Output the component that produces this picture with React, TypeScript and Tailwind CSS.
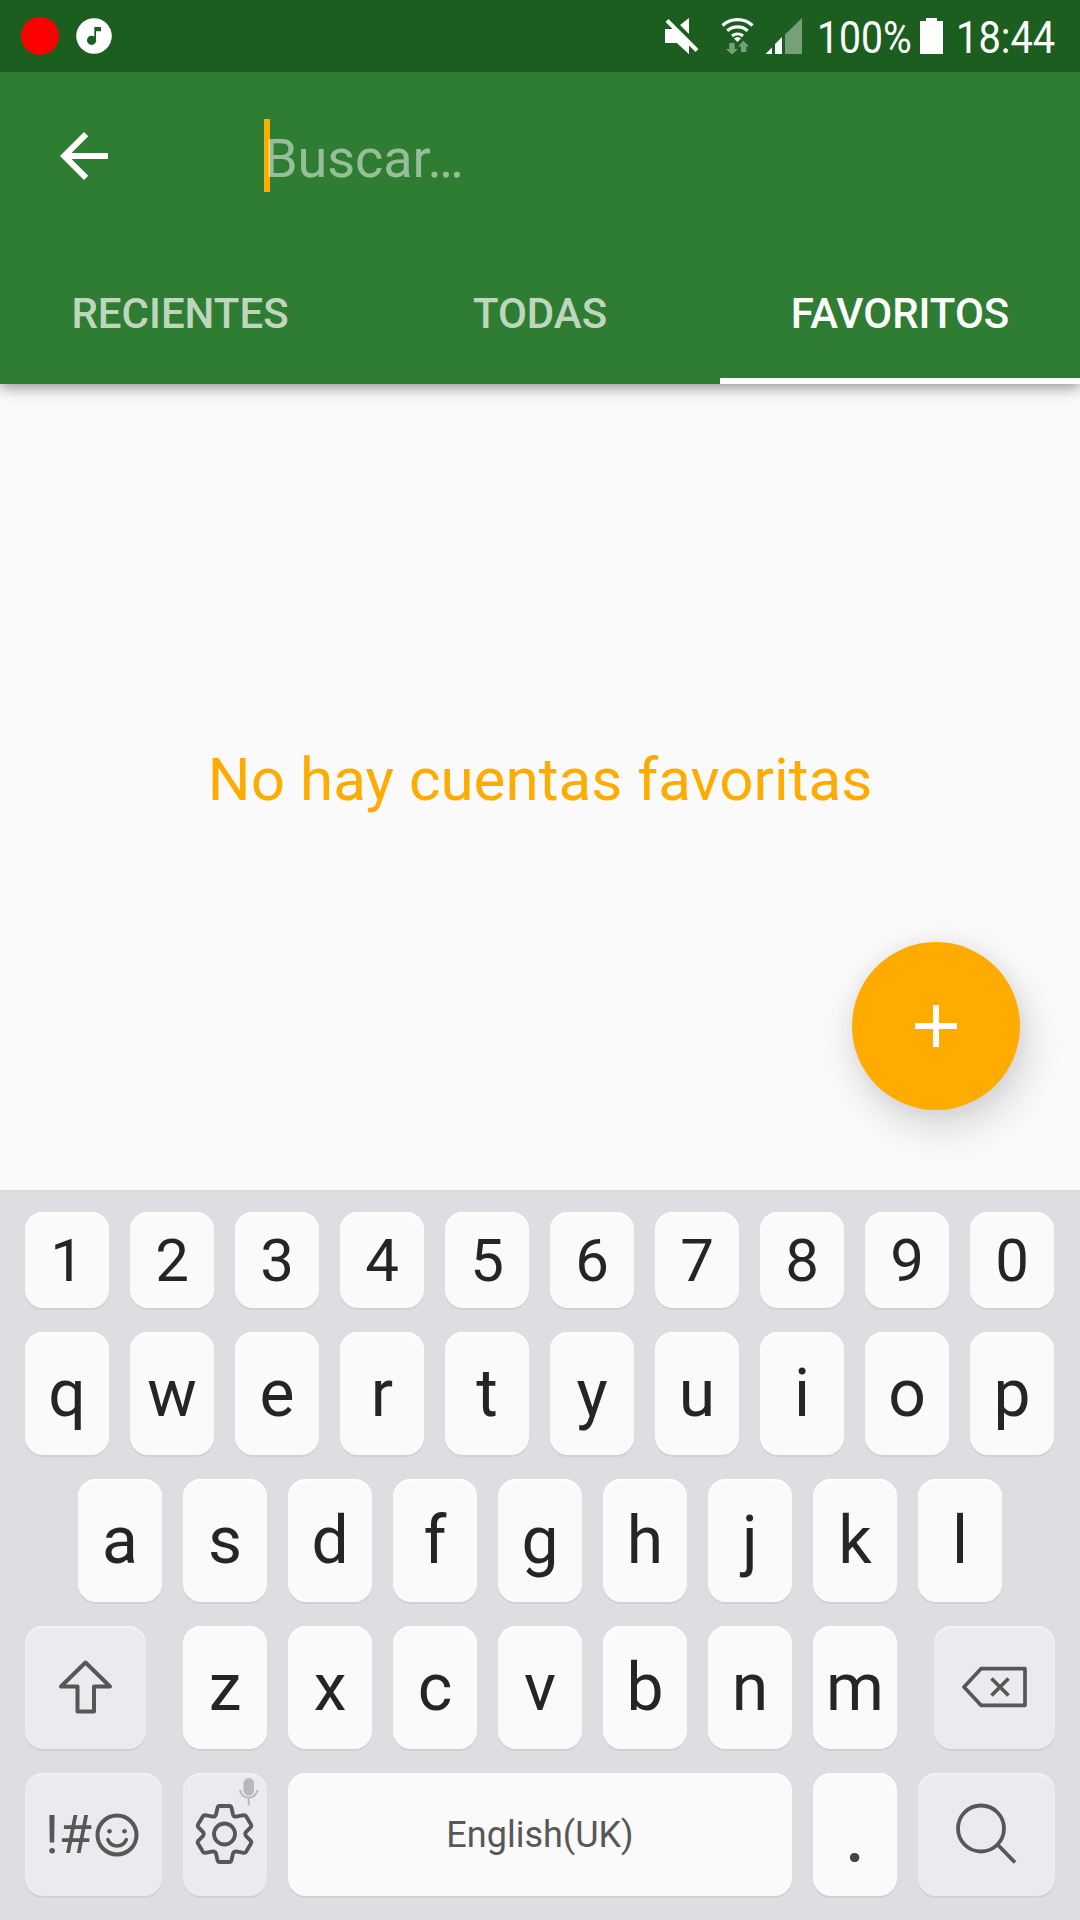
import React from "react";

const keyLight =
  "flex items-center justify-center rounded-[18px] bg-[#fafafb] text-[#252525] shadow-[0_2px_0_#d0d1d5,inset_0_2px_1px_#ffffff]";
const keyDark =
  "relative flex items-center justify-center rounded-[18px] bg-[#e9ebef] text-[#575757] shadow-[0_2px_0_#d0d1d5,inset_0_2px_1px_#f2f3f5]";

function Letters({ chars }: { chars: string }) {
  return (
    <>
      {chars.split("").map((c) => (
        <div key={c} className={`${keyLight} h-[123px] w-[84px] pt-px text-[66px]`}>
          {c}
        </div>
      ))}
    </>
  );
}

function StatusBar() {
  return (
    <div className="relative z-20 flex h-[72px] items-center justify-between bg-[#1b5e20]">
      <svg width="120" height="72" viewBox="0 0 120 72">
        <circle cx="40" cy="36" r="19" fill="#f00" />
        <circle cx="94" cy="36" r="17.8" fill="#fff" />
        <path d="M94.3 27H101v4.2h-5V40h-1.7z" fill="#1b5e20" />
        <circle cx="91.6" cy="40.3" r="4.6" fill="#1b5e20" />
      </svg>
      <div className="flex h-[72px] items-center">
        <svg width="157" height="72" viewBox="660 0 157 72" fill="#fff">
          <path d="M689 18v16l-9-9zM665 29h7l17 17v8l-12-11h-12z" />
          <path d="M667 20.5l30 30" stroke="#1b5e20" strokeWidth="8" />
          <path d="M667 20.5l30 30" stroke="#fff" strokeWidth="4" />
          <path d="M665 29h9l15 15v10l-12-11h-12z" />
          <g fill="none" stroke="#fff" strokeWidth="3.2">
            <path d="M722.5 25.5a22 22 0 0 1 30 0" />
            <path d="M727.3 30.8a15.3 15.3 0 0 1 20.4 0" />
            <path d="M732 36a8.6 8.6 0 0 1 11 0" />
          </g>
          <path d="M737.5 42l-3.6-3.4a5.5 5.5 0 0 1 7.2 0z" />
          <path d="M729.3 43h5.3v6h3.4l-6 5.6-6-5.6h3.3zM741 52h5.3v-5.5h2.6l-5.6-5.8-5.4 5.8h3.1z" fill="#77a07a" />
          <path d="M765.500 54l6.500-6.500v6.500zM775 54V44l7-7v17z" />
          <path d="M785 54V34.500l17-16.500v36z" fill="#77a07a" />
        </svg>
        <span className="-mr-[12px] inline-block w-[103px] origin-left scale-x-[0.87] pt-[2px] text-[45px] leading-none whitespace-nowrap text-white">
          100%
        </span>
        <svg width="34" height="72" viewBox="914 0 34 72" className="ml-[6px]" fill="#fff">
          <path d="M926 18h11v3h6v33h-23V21h6z" />
        </svg>
        <span className="ml-[8px] inline-block w-[124px] origin-left scale-x-[0.885] pt-[2px] text-[45px] leading-none whitespace-nowrap text-white">
          18:44
        </span>
      </div>
    </div>
  );
}

export default function App() {
  return (
    <div className="flex h-[1920px] w-[1080px] flex-col overflow-hidden bg-[#fafafa] font-['Roboto',sans-serif]">
      <StatusBar />
      <header className="relative z-10 h-[312px] bg-[#2f7d32] shadow-[0_3px_14px_rgba(0,0,0,0.45)]">
        <div className="flex h-[168px] items-center pl-[60px]">
          <svg width="48" height="48" viewBox="4 4 16 16" fill="#fff">
            <path d="M20 11H7.830l5.590-5.590L12 4l-8 8 8 8 1.410-1.410L7.830 13H20z" />
          </svg>
          <div className="mb-px ml-[156px] h-[73px] w-[6px] bg-[#ffab00]" />
          <span className="-ml-[6px] pt-[5px] text-[54px] leading-none tracking-[-0.1px] text-white/50">Buscar…</span>
        </div>
        <nav className="grid h-[144px] grid-cols-3 text-center text-[42px] leading-[147px] font-medium text-white/70">
          <span className="h-[144px]">RECIENTES</span>
          <span className="h-[144px]">TODAS</span>
          <span className="h-[144px] border-b-[6px] border-white text-white">FAVORITOS</span>
        </nav>
      </header>

      <main className="relative flex h-[806px] items-center justify-center">
        <p className="pb-[14px] text-[60px] leading-none tracking-[0.1px] text-[#ffab00]">No hay cuentas favoritas</p>
        <button className="absolute right-[60px] bottom-[80px] flex size-[168px] items-center justify-center rounded-full bg-[#ffab00] shadow-[6px_16px_40px_rgba(0,0,0,0.16),0_0_20px_rgba(0,0,0,0.05)]">
          <svg width="42" height="42" viewBox="0 0 42 42">
            <path d="M18 0h6v18h18v6H24v18h-6V24H0v-6h18z" fill="#fff" />
          </svg>
        </button>
      </main>

      <section className="flex h-[730px] flex-col items-start gap-6 border-t border-[#d6d7da] bg-[#dddee2] pt-[21px] pl-[25px] leading-none">
        <div className="flex gap-[21px]">
          {"1234567890".split("").map((c) => (
            <div key={c} className={`${keyLight} h-[96px] w-[84px] pt-[2px] text-[60px]`}>
              {c}
            </div>
          ))}
        </div>
        <div className="flex gap-[21px]">
          <Letters chars="qwertyuiop" />
        </div>
        <div className="ml-[53px] flex gap-[21px]">
          <Letters chars="asdfghjkl" />
        </div>
        <div className="flex gap-[37px]">
          <div className={`${keyDark} h-[123px] w-[121px]`}>
            <svg width="121" height="123" viewBox="25 1626 121 123" fill="none" stroke="currentColor" strokeWidth="4" strokeLinejoin="round">
              <path d="M85.500 1662.500L61 1686.500h16.500v25h16.500v-25h16z" />
            </svg>
          </div>
          <div className="flex gap-[21px]">
            <Letters chars="zxcvbnm" />
          </div>
          <div className={`${keyDark} h-[123px] w-[121px]`}>
            <svg width="121" height="123" viewBox="934 1626 121 123" fill="none" stroke="currentColor" strokeWidth="3.700" strokeLinejoin="round">
              <path d="M964 1687l17-18.300h44v36.600h-44zM991.500 1678.500l17 17M1008.500 1678.500l-17 17" />
            </svg>
          </div>
        </div>
        <div className="flex gap-[21px]">
          <div className={`${keyDark} h-[123px] w-[137px] pr-[3px]`}>
            <span className="text-[54px]">!#</span>
            <svg width="44" height="44" viewBox="0 0 44 44" className="ml-[3px]" fill="none" stroke="currentColor" strokeWidth="4">
              <circle cx="22" cy="22" r="19.500" />
              <path d="M12.800 26.500c3.500 8.500 15 8.500 18.600 0" strokeLinecap="round" strokeWidth="3.500" />
              <circle cx="14.500" cy="18.300" r="2.300" fill="currentColor" stroke="none" />
              <circle cx="29.500" cy="18.300" r="2.300" fill="currentColor" stroke="none" />
            </svg>
          </div>
          <div className={`${keyDark} h-[123px] w-[84px]`}>
            <svg width="84" height="123" viewBox="183 1773 84 123" fill="none" stroke="currentColor" strokeWidth="3.800" strokeLinejoin="round">
              <circle cx="224.500" cy="1834" r="10.500" />
              <path d="M219.500 1806h10q1.500 0 1.900 1.500l1.600 7q.6 2.200 3 2.200l7.800-1.500q1.500-.2 2.300 1l5 8.600q.7 1.200-.3 2.400l-4.900 5q-1.300 1.800 0 3.600l4.900 5q1 1.200.3 2.400l-5 8.600q-.8 1.200-2.300 1l-7.800-1.500q-2.400 0-3 2.200l-1.600 7q-.4 1.500-1.900 1.500h-10q-1.500 0-1.900-1.500l-1.600-7q-.6-2.200-3-2.200l-7.800 1.500q-1.500.2-2.300-1l-5-8.600q-.7-1.200.3-2.400l4.900-5q1.300-1.800 0-3.600l-4.900-5q-1-1.200-.3-2.400l5-8.600q.8-1.200 2.300-1l7.800 1.500q2.400 0 3-2.200l1.600-7q.4-1.500 1.900-1.500z" />
              <g stroke="#b8b8ba" strokeWidth="2">
                <rect x="243.500" y="1778" width="10.500" height="17.500" rx="5.200" fill="#b8b8ba" stroke="none" />
                <path d="M240 1790a8.700 8.700 0 0 0 17.300 0M248.700 1799v6.500" />
              </g>
            </svg>
          </div>
          <div className={`${keyLight} h-[123px] w-[504px] text-[36px] text-[#575757]`}>English(UK)</div>
          <div className={`${keyLight} h-[123px] w-[84px] pb-[2px] text-[84px] text-[#444444]`}>.</div>
          <div className={`${keyDark} h-[123px] w-[137px]`}>
            <svg width="137" height="123" viewBox="918 1773 137 123" fill="none" stroke="currentColor" strokeWidth="3.800">
              <circle cx="981" cy="1828.500" r="23" />
              <path d="M998 1845l17 17.500" />
            </svg>
          </div>
        </div>
      </section>
    </div>
  );
}
